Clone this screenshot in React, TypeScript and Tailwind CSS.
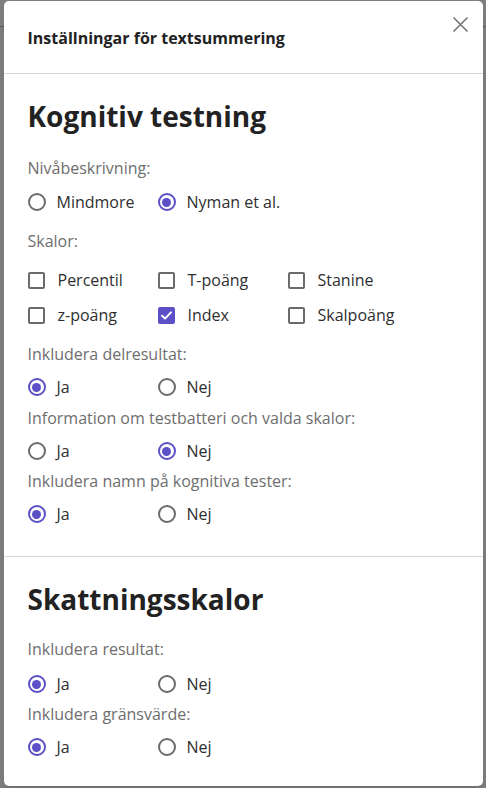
const font = "font-['Open_Sans','Liberation_Sans',sans-serif]";

function Radio({ checked, label }: { checked?: boolean; label: string }) {
  return (
    <label className="flex h-6 w-[130px] items-center gap-[11px]">
      <span
        className={`flex h-[18px] w-[18px] shrink-0 items-center justify-center rounded-full border-2 ${
          checked ? "border-[#5b50c6]" : "border-[#6b6b6b]"
        }`}
      >
        {checked && <span className="h-[9px] w-[9px] rounded-full bg-[#5b50c6]" />}
      </span>
      <span className="text-[16px] text-[#2f2f2f]">{label}</span>
    </label>
  );
}

function Check({ checked, label }: { checked?: boolean; label: string }) {
  return (
    <label className="flex h-6 w-[130px] items-center gap-[13px]">
      {checked ? (
        <span className="flex h-[17px] w-[17px] shrink-0 items-center justify-center rounded-[2px] bg-[#5b50c6]">
          <svg width="13" height="13" viewBox="0 0 13 13" fill="none">
            <path d="M2 6.8 L5 9.6 L11 3.4" stroke="white" strokeWidth="2" strokeLinecap="round" strokeLinejoin="round" />
          </svg>
        </span>
      ) : (
        <span className="h-[17px] w-[17px] shrink-0 rounded-[2px] border-2 border-[#6b6b6b]" />
      )}
      <span className="text-[16px] text-[#2f2f2f]">{label}</span>
    </label>
  );
}

function Label({ children, className = "" }: { children: string; className?: string }) {
  return <p className={`h-6 text-[16px] leading-6 text-[#6e6e6e] ${className}`}>{children}</p>;
}

function YesNo({ yes }: { yes: boolean }) {
  return (
    <div className="mt-[9px] flex">
      <Radio label="Ja" checked={yes} />
      <Radio label="Nej" checked={!yes} />
    </div>
  );
}

export default function App() {
  return (
    <div className={`relative h-[788px] overflow-hidden bg-white ${font}`}>
      <div className="h-[27px] border-b border-[#bbb]" />

      <div className="absolute inset-0 flex justify-center bg-black/50 px-[3px] pt-px pb-[2px]">
        <div className="flex w-[479px] flex-col rounded-[5px] bg-white shadow-lg">
          <header className="relative flex h-[73px] shrink-0 items-center border-b border-[#d6d6d6] px-6">
            <h1 className="pt-[2px] text-[16px] font-bold text-[#222]">Inställningar för textsummering</h1>
            <button className="absolute right-[14px] top-[15px] p-0" aria-label="Stäng">
              <svg width="17" height="17" viewBox="0 0 17 17" fill="none">
                <path d="M1.5 1.5 L15.5 15.5 M15.5 1.5 L1.5 15.5" stroke="#707070" strokeWidth="1.5" />
              </svg>
            </button>
          </header>

          <section className="border-b border-[#d6d6d6] px-6 pt-[23px] pb-[30px]">
            <h2 className="h-[38px] text-[28px] font-bold leading-[38px] text-[#222]">Kognitiv testning</h2>
            <Label className="mt-[21px]">Nivåbeskrivning:</Label>
            <div className="mt-[10px] flex">
              <Radio label="Mindmore" />
              <Radio label="Nyman et al." checked />
            </div>
            <Label className="mt-[15px]">Skalor:</Label>
            <div className="mt-[15px] grid grid-cols-[130px_130px_130px] gap-y-[11px]">
              <Check label="Percentil" />
              <Check label="T-poäng" />
              <Check label="Stanine" />
              <Check label="z-poäng" />
              <Check label="Index" checked />
              <Check label="Skalpoäng" />
            </div>
            <Label className="mt-[15px]">Inkludera delresultat:</Label>
            <YesNo yes />
            <Label className="mt-[7px]">Information om testbatteri och valda skalor:</Label>
            <YesNo yes={false} />
            <Label className="mt-[6px]">Inkludera namn på kognitiva tester:</Label>
            <YesNo yes />
          </section>

          <section className="px-6 pt-[23px] pb-[28px]">
            <h2 className="h-[38px] text-[28px] font-bold leading-[38px] text-[#222]">Skattningsskalor</h2>
            <Label className="mt-[19px]">Inkludera resultat:</Label>
            <div className="mt-[11px] flex">
              <Radio label="Ja" checked />
              <Radio label="Nej" />
            </div>
            <Label className="mt-[6px]">Inkludera gränsvärde:</Label>
            <YesNo yes />
          </section>
        </div>
      </div>
    </div>
  );
}
